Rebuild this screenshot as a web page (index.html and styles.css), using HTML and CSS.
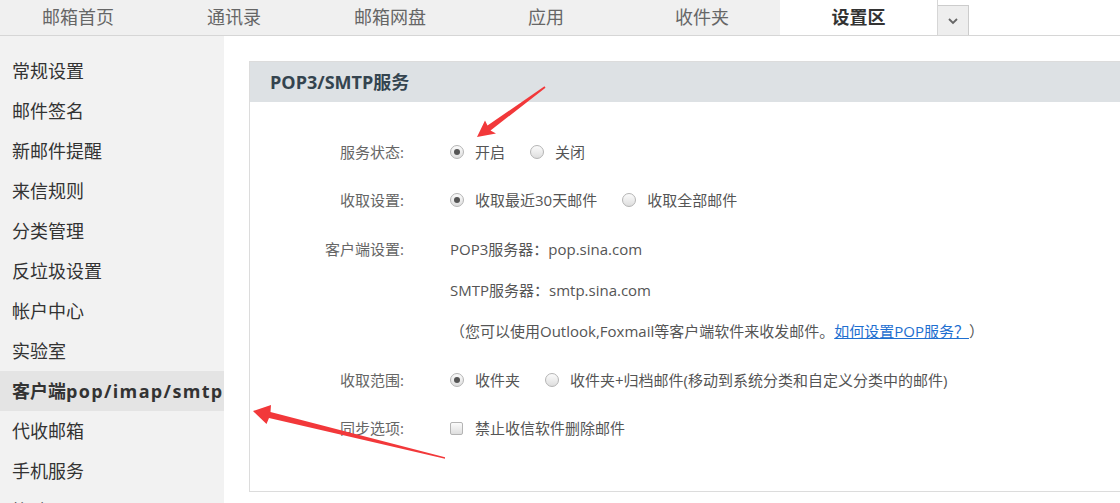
FILE: index.html
```html
<!DOCTYPE html>
<html lang="zh-CN">
<head>
<meta charset="utf-8">
<title>设置区</title>
<link rel="stylesheet" href="styles.css">
</head>
<body>
<div class="page">
  <div class="topnav">
    <div class="tab">邮箱首页</div>
    <div class="tab">通讯录</div>
    <div class="tab">邮箱网盘</div>
    <div class="tab">应用</div>
    <div class="tab">收件夹</div>
    <div class="tab on">设置区</div>
    <div class="more">
      <svg width="12" height="8" viewBox="0 0 12 8"><path d="M2 2 L6 6 L10 2" fill="none" stroke="#666" stroke-width="1.8"/></svg>
    </div>
  </div>
  <div class="body">
    <div class="side">
      <div class="item">常规设置</div>
      <div class="item">邮件签名</div>
      <div class="item">新邮件提醒</div>
      <div class="item">来信规则</div>
      <div class="item">分类管理</div>
      <div class="item">反垃圾设置</div>
      <div class="item">帐户中心</div>
      <div class="item">实验室</div>
      <div class="item on">客户端<span class="lat">pop/imap/smtp</span></div>
      <div class="item">代收邮箱</div>
      <div class="item">手机服务</div>
      <div class="item">换肤</div>
    </div>
    <div class="main">
      <div class="panel">
        <div class="panel-head">POP3/SMTP服务</div>
        <div class="panel-body">
          <div class="row">
            <div class="label">服务状态:</div>
            <div class="value">
              <span class="opt"><span class="radio checked"></span>开启</span>
              <span class="opt"><span class="radio"></span>关闭</span>
            </div>
          </div>
          <div class="row">
            <div class="label">收取设置:</div>
            <div class="value">
              <span class="opt"><span class="radio checked"></span>收取最近30天邮件</span>
              <span class="opt"><span class="radio"></span>收取全部邮件</span>
            </div>
          </div>
          <div class="row multi">
            <div class="label">客户端设置:</div>
            <div class="value col">
              <div class="line">POP3服务器：pop.sina.com</div>
              <div class="line">SMTP服务器：smtp.sina.com</div>
              <div class="line">（您可以使用Outlook,Foxmail等客户端软件来收发邮件。<a class="link" href="#">如何设置POP服务？</a>）</div>
            </div>
          </div>
          <div class="row">
            <div class="label">收取范围:</div>
            <div class="value">
              <span class="opt"><span class="radio checked"></span>收件夹</span>
              <span class="opt"><span class="radio"></span>收件夹+归档邮件(移动到系统分类和自定义分类中的邮件)</span>
            </div>
          </div>
          <div class="row">
            <div class="label">同步选项:</div>
            <div class="value">
              <span class="opt"><span class="check"></span>禁止收信软件删除邮件</span>
            </div>
          </div>
        </div>
      </div>
    </div>
  </div>
  <svg class="arrows" width="1120" height="503" viewBox="0 0 1120 503">
    <polygon points="477,137 485,120.5 487.5,125.5 544.5,86.3 545.5,87.7 490.5,130.5 496,133.5" fill="#f2383a"/>
    <polygon points="253,411 271,405 270.5,412 445,457.3 445,458.7 269,418 266.5,424" fill="#f2383a"/>
  </svg>
</div>
</body>
</html>
```

FILE: styles.css
```css
* { box-sizing: border-box; }
html, body { margin: 0; padding: 0; }
body {
  width: 1120px;
  height: 503px;
  overflow: hidden;
  background: #fff;
  font-family: "Open Sans", "Noto Sans CJK SC", sans-serif;
}
.page { position: relative; width: 1120px; height: 503px; display: flex; flex-direction: column; }

.topnav {
  display: flex;
  height: 36px;
  border-bottom: 1px solid #d6d6d6;
  background: #fff;
  flex: none;
}
.tab {
  width: 156px;
  background: #f0f0f0;
  color: #666;
  font-size: 18px;
  line-height: 35px;
  text-align: center;
}
.tab.on {
  width: 158px;
  background: #fff;
  color: #333;
  font-weight: bold;
  border-right: 1px solid #d6d6d6;
}
.more {
  width: 31px;
  margin-top: 5px;
  background: #eee;
  border: 1px solid #ccc;
  border-left: none;
  border-bottom: none;
  display: flex;
  align-items: center;
  justify-content: center;
}

.body { display: flex; flex: 1; min-height: 0; overflow: hidden; }
.side {
  width: 224px;
  flex: none;
  background: #f2f2f2;
  padding-top: 15px;
}
.item {
  height: 40px;
  line-height: 40px;
  padding-left: 12px;
  font-size: 18px;
  color: #333;
  white-space: nowrap;
}
.item.on { background: #e4e4e4; font-weight: bold; }
.item .lat { letter-spacing: 1.35px; }

.main { flex: 1; padding: 25px 0 0 25px; min-width: 0; }
.panel {
  border: 1px solid #dcdcdc;
  margin-right: -2px;
  height: 431px;
}
.panel-head {
  height: 40px;
  line-height: 40px;
  background: #dde1e4;
  padding-left: 20px;
  font-size: 18px;
  font-weight: bold;
  color: #34444f;
}
.panel-body { padding-top: 26px; }
.row {
  display: flex;
  padding: 13px 0;
  font-size: 15px;
  line-height: 22px;
  color: #555;
}
.row.multi { padding: 14px 0 14px; }
.label {
  width: 154px;
  text-align: right;
  color: #666;
  flex: none;
}
.value { margin-left: 46px; display: flex; align-items: center; white-space: nowrap; }
.value.col { flex-direction: column; align-items: flex-start; }
.line + .line { margin-top: 19px; }
.opt { display: inline-flex; align-items: center; margin-right: 25px; }
.radio {
  width: 14px;
  height: 14px;
  border-radius: 50%;
  border: 1px solid #b4b4b4;
  background: linear-gradient(#fbfbfb, #dedede);
  margin-right: 11px;
  position: relative;
  flex: none;
}
.radio.checked::after {
  content: "";
  position: absolute;
  left: 3px; top: 3px;
  width: 6px; height: 6px;
  border-radius: 50%;
  background: #555;
}
.check {
  width: 13px;
  height: 13px;
  border-radius: 2px;
  border: 1px solid #b4b4b4;
  background: linear-gradient(#fbfbfb, #dedede);
  margin-right: 12px;
  flex: none;
}
.link { color: #1e6fd0; text-decoration: underline; }

.arrows { position: absolute; left: 0; top: 0; pointer-events: none; }
```
